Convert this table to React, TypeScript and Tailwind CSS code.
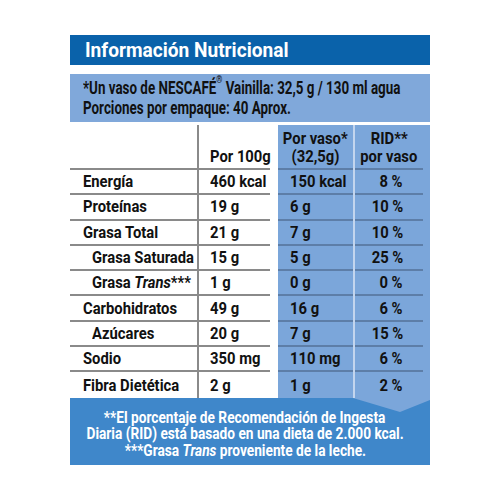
const rows: { label: React.ReactNode; indent?: boolean; a: string; b: string; c: string }[] = [
  { label: "Energía", a: "460 kcal", b: "150 kcal", c: "8 %" },
  { label: "Proteínas", a: "19 g", b: "6 g", c: "10 %" },
  { label: "Grasa Total", a: "21 g", b: "7 g", c: "10 %" },
  { label: "Grasa Saturada", indent: true, a: "15 g", b: "5 g", c: "25 %" },
  {
    label: (
      <>
        Grasa <i>Trans</i>***
      </>
    ),
    indent: true,
    a: "1 g",
    b: "0 g",
    c: "0 %",
  },
  { label: "Carbohidratos", a: "49 g", b: "16 g", c: "6 %" },
  { label: "Azúcares", indent: true, a: "20 g", b: "7 g", c: "15 %" },
  { label: "Sodio", a: "350 mg", b: "110 mg", c: "6 %" },
  { label: "Fibra Dietética", a: "2 g", b: "1 g", c: "2 %" },
];

const font = { fontFamily: "Roboto, sans-serif" };

// narrow text: the label uses a condensed face, squeezed here
function N({ children, o = "origin-left" }: { children: React.ReactNode; o?: string }) {
  return <span className={`inline-block whitespace-nowrap scale-x-[0.87] ${o}`}>{children}</span>;
}

function S({ children }: { children: React.ReactNode }) {
  return <span className="inline-block whitespace-nowrap scale-x-[0.765] origin-left">{children}</span>;
}

function F({ children }: { children: React.ReactNode }) {
  return <span className="inline-block whitespace-nowrap scale-x-[0.83] origin-center">{children}</span>;
}

export default function App() {
  return (
    <div className="w-[500px] h-[500px] bg-white pt-[35px] pl-[70px]" style={font}>
      <div className="w-[360px] font-bold">
        {/* title */}
        <div className="h-[30px] bg-[#0a62aa] text-white text-[21px] leading-[30px] pl-[15px]">
          <span className="inline-block whitespace-nowrap scale-x-[0.91] origin-left">Información Nutricional</span>
        </div>

        {/* serving */}
        <div className="mt-[9px] h-[48px] bg-[#80a8da] text-[#111] text-[17.5px] leading-[20px] pl-[13px] pt-[4px]">
          <div>
            <S>
              *Un vaso de NESCAFÉ<sup className="text-[10px] align-[6px]">®</sup> Vainilla: 32,5 g / 130 ml agua
            </S>
          </div>
          <div>
            <S>Porciones por empaque: 40 Aprox.</S>
          </div>
        </div>

        {/* table */}
        <div className="mt-[3px] text-[#111] text-[17px]">
          <div className="grid grid-cols-[129px_79px_75px_77px] h-[45px]">
            <div className="border-r-2 border-[#8a8a8a]">
              <div className="h-full border-b-2 border-[#8a8a8a]" />
            </div>
            <div className="pr-[8px]">
              <div className="h-full border-b-2 border-[#8a8a8a] flex items-end pl-[11px] pb-[3px] leading-[18px]">
                <N>Por 100g</N>
              </div>
            </div>
            <div className="bg-[#7ba6da]">
              <div className="h-full border-b-2 border-[#5d7ea8] flex flex-col items-center justify-end pb-[3px] leading-[18px]">
                <N o="origin-center">Por vaso*</N>
                <N o="origin-center">(32,5g)</N>
              </div>
            </div>
            <div className="bg-[#7ba6da] border-l-2 border-[#c3d5ee] pr-[7px]">
              <div className="h-full border-b-2 border-[#5d7ea8] flex flex-col items-center justify-end pb-[3px] leading-[18px]">
                <N o="origin-center">RID**</N>
                <N o="origin-center">por vaso</N>
              </div>
            </div>
          </div>

          {rows.map((r, i) => {
            const last = i === rows.length - 1;
            const line = last ? "" : "border-b-2";
            return (
              <div key={i} className="grid grid-cols-[129px_79px_75px_77px] h-[25.3px]">
                <div className="border-r-2 border-[#8a8a8a]">
                  <div
                    className={`h-full ${line} border-[#8a8a8a] flex items-center leading-none ${
                      r.indent ? "pl-[22px]" : "pl-[13px]"
                    }`}
                  >
                    <N>{r.label}</N>
                  </div>
                </div>
                <div className="pr-[8px]">
                  <div className={`h-full ${line} border-[#8a8a8a] flex items-center pl-[11px] leading-none`}>
                    <N>{r.a}</N>
                  </div>
                </div>
                <div className="bg-[#7ba6da]">
                  <div className={`h-full ${line} border-[#5d7ea8] flex items-center pl-[12px] leading-none`}>
                    <N>{r.b}</N>
                  </div>
                </div>
                <div className="bg-[#7ba6da] border-l-2 border-[#c3d5ee] pr-[7px]">
                  <div className={`h-full ${line} border-[#5d7ea8] flex items-center justify-end pr-[20px] leading-none`}>
                    <N o="origin-right">{r.c}</N>
                  </div>
                </div>
              </div>
            );
          })}
        </div>

        {/* footnotes */}
        <div className="relative h-[67px] bg-[#3f87ca] text-white text-[16.5px] leading-[16.7px] pt-[12px] pr-[10px] flex flex-col items-center">
          <svg className="absolute left-0 top-0" width="360" height="16" viewBox="0 0 360 16">
            <polygon points="283,0 360,0 360,2 330,14" fill="#7ba6da" />
          </svg>
          <div className="relative leading-[16.7px]">
            <F>**El porcentaje de Recomendación de Ingesta</F>
          </div>
          <div className="relative leading-[16.7px]">
            <F>Diaria (RID) está basado en una dieta de 2.000 kcal.</F>
          </div>
          <div className="relative leading-[16.7px]">
            <F>
              ***Grasa <i>Trans</i> proveniente de la leche.
            </F>
          </div>
        </div>
      </div>
    </div>
  );
}
